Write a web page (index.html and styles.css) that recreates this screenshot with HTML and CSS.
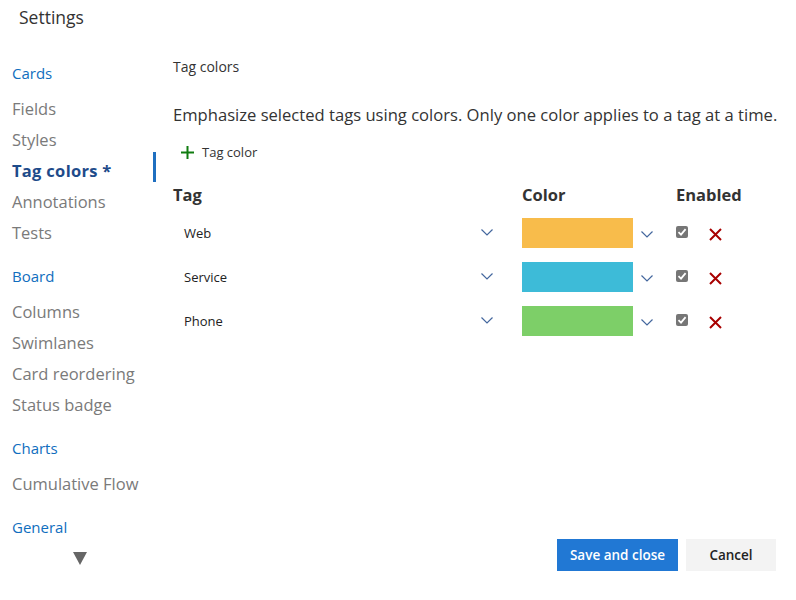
FILE: index.html
```html
<!DOCTYPE html>
<html>
<head>
<meta charset="utf-8">
<link rel="stylesheet" href="styles.css">
</head>
<body>
<div class="page">
  <header class="title">Settings</header>
  <div class="main">
    <nav class="sidebar">
      <div class="group">
        <div class="group-head">Cards</div>
        <div class="item">Fields</div>
        <div class="item">Styles</div>
        <div class="item active">Tag colors *</div>
        <div class="item">Annotations</div>
        <div class="item">Tests</div>
      </div>
      <div class="group">
        <div class="group-head">Board</div>
        <div class="item">Columns</div>
        <div class="item">Swimlanes</div>
        <div class="item">Card reordering</div>
        <div class="item">Status badge</div>
      </div>
      <div class="group">
        <div class="group-head">Charts</div>
        <div class="item">Cumulative Flow</div>
      </div>
      <div class="group">
        <div class="group-head">General</div>
      </div>
      <div class="more"><span class="tri"></span></div>
    </nav>
    <section class="content">
      <div class="section-title">Tag colors</div>
      <p class="desc">Emphasize selected tags using colors. Only one color applies to a tag at a time.</p>
      <button class="add">
        <svg width="13" height="13" viewBox="0 0 13 13"><path d="M6.5 0v13M0 6.5h13" stroke="#107c10" stroke-width="2"/></svg>
        <span>Tag color</span>
      </button>
      <div class="table">
        <div class="th">Tag</div>
        <div class="th">Color</div>
        <div class="th">Enabled</div>

        <div class="cell tag"><span>Web</span><svg class="chev" width="12" height="7" viewBox="0 0 12 7"><path d="M0.5 0.5L6 6L11.5 0.5" fill="none" stroke="#44679e" stroke-width="1.2"/></svg></div>
        <div class="cell color"><span class="swatch" style="background:#f8bc4b"></span><svg class="chev" width="12" height="7" viewBox="0 0 12 7"><path d="M0.5 0.5L6 6L11.5 0.5" fill="none" stroke="#44679e" stroke-width="1.2"/></svg></div>
        <div class="cell enabled"><span class="check"><svg width="12" height="12" viewBox="0 0 12 12"><path d="M2.5 6.2L5 8.6L9.6 3.2" fill="none" stroke="#fff" stroke-width="1.8"/></svg></span><svg class="del" width="13" height="13" viewBox="0 0 13 13"><path d="M1 1L12 12M12 1L1 12" stroke="#a80000" stroke-width="2"/></svg></div>

        <div class="cell tag"><span>Service</span><svg class="chev" width="12" height="7" viewBox="0 0 12 7"><path d="M0.5 0.5L6 6L11.5 0.5" fill="none" stroke="#44679e" stroke-width="1.2"/></svg></div>
        <div class="cell color"><span class="swatch" style="background:#3dbbd8"></span><svg class="chev" width="12" height="7" viewBox="0 0 12 7"><path d="M0.5 0.5L6 6L11.5 0.5" fill="none" stroke="#44679e" stroke-width="1.2"/></svg></div>
        <div class="cell enabled"><span class="check"><svg width="12" height="12" viewBox="0 0 12 12"><path d="M2.5 6.2L5 8.6L9.6 3.2" fill="none" stroke="#fff" stroke-width="1.8"/></svg></span><svg class="del" width="13" height="13" viewBox="0 0 13 13"><path d="M1 1L12 12M12 1L1 12" stroke="#a80000" stroke-width="2"/></svg></div>

        <div class="cell tag"><span>Phone</span><svg class="chev" width="12" height="7" viewBox="0 0 12 7"><path d="M0.5 0.5L6 6L11.5 0.5" fill="none" stroke="#44679e" stroke-width="1.2"/></svg></div>
        <div class="cell color"><span class="swatch" style="background:#7dcf68"></span><svg class="chev" width="12" height="7" viewBox="0 0 12 7"><path d="M0.5 0.5L6 6L11.5 0.5" fill="none" stroke="#44679e" stroke-width="1.2"/></svg></div>
        <div class="cell enabled"><span class="check"><svg width="12" height="12" viewBox="0 0 12 12"><path d="M2.5 6.2L5 8.6L9.6 3.2" fill="none" stroke="#fff" stroke-width="1.8"/></svg></span><svg class="del" width="13" height="13" viewBox="0 0 13 13"><path d="M1 1L12 12M12 1L1 12" stroke="#a80000" stroke-width="2"/></svg></div>
      </div>
      <div class="footer">
        <button class="btn primary">Save and close</button>
        <button class="btn secondary">Cancel</button>
      </div>
    </section>
  </div>
</div>
</body>
</html>
```

FILE: styles.css
```css
* { box-sizing: border-box; }
html, body { margin: 0; padding: 0; background: #fff; }
body {
  font-family: "Open Sans", "Noto Sans", sans-serif;
  color: #333;
  width: 796px;
  height: 600px;
  overflow: hidden;
}
.page { display: flex; flex-direction: column; height: 600px; }
.title {
  height: 40px;
  line-height: 34px;
  padding-left: 19px;
  font-size: 17.5px;
  color: #333;
}
.main { display: flex; height: 560px; }
.sidebar {
  width: 156px;
  flex: none;
  padding-top: 18px;
  display: flex;
  flex-direction: column;
}
.group { display: flex; flex-direction: column; margin-bottom: 13px; }
.group-head {
  padding-left: 12px;
  height: 31px;
  line-height: 31px;
  font-size: 15px;
  color: #106ebe;
  margin-bottom: 4px;
}
.item {
  padding-left: 12px;
  height: 31px;
  line-height: 31px;
  font-size: 16.5px;
  color: #7a7a7a;
  white-space: nowrap;
  position: relative;
}
.item.active { color: #1e4b8a; font-weight: 700; letter-spacing: 0.3px; }
.item.active::after {
  content: "";
  position: absolute;
  right: 0;
  top: -3px;
  width: 3px;
  height: 30px;
  background: #1f6fc0;
}
.more { display: flex; justify-content: center; padding-left: 4px; margin-top: -8px; }
.tri {
  width: 0; height: 0;
  border-left: 7px solid transparent;
  border-right: 7px solid transparent;
  border-top: 13px solid #666;
}
.content {
  flex: 1;
  min-width: 0;
  display: flex;
  flex-direction: column;
  padding-left: 17px;
  padding-top: 17px;
  padding-bottom: 29px;
  padding-right: 20px;
}
.section-title { font-size: 14px; line-height: 20px; color: #333; }
.desc { margin: 26px 0 0; font-size: 16.6px; line-height: 24px; color: #333; white-space: nowrap; }
.add {
  margin-top: 15px;
  align-self: flex-start;
  display: flex;
  align-items: center;
  gap: 8px;
  border: 0;
  background: none;
  padding: 0 0 0 8px;
  height: 20px;
  font-family: inherit;
  font-size: 13px;
  color: #333;
}
.table {
  margin-top: 21px;
  display: grid;
  grid-template-columns: 349px 154px 1fr;
  grid-template-rows: 28px;
  grid-auto-rows: 44px;
}
.table .th {
  font-size: 16.5px;
  font-weight: 700;
  line-height: 24px;
  color: #333;
}
.cell { display: flex; align-items: center; }
.tag {
  width: 330px;
  padding: 0 10px 0 11px;
  justify-content: space-between;
  font-size: 13px;
  color: #222;
}
.swatch { width: 111px; height: 30px; display: block; }
.color { gap: 8px; }
.color .chev { margin-top: 2px; }
.tag .chev { margin-top: -1px; }
.enabled { gap: 21px; }
.check {
  width: 12px; height: 12px;
  border-radius: 2px;
  background: #767676;
  display: block;
  margin-top: -2px;
}
.check svg { display: block; }
.del { margin-top: 3px; }
.footer {
  margin-top: auto;
  display: flex;
  justify-content: flex-end;
  gap: 8px;
}
.btn {
  height: 32px;
  border: 0;
  font-family: inherit;
  font-size: 13.5px;
  font-weight: 600;
}
.primary { width: 121px; background: #2178d4; color: #fff; }
.secondary { width: 90px; background: #f3f3f3; color: #222; }
```
